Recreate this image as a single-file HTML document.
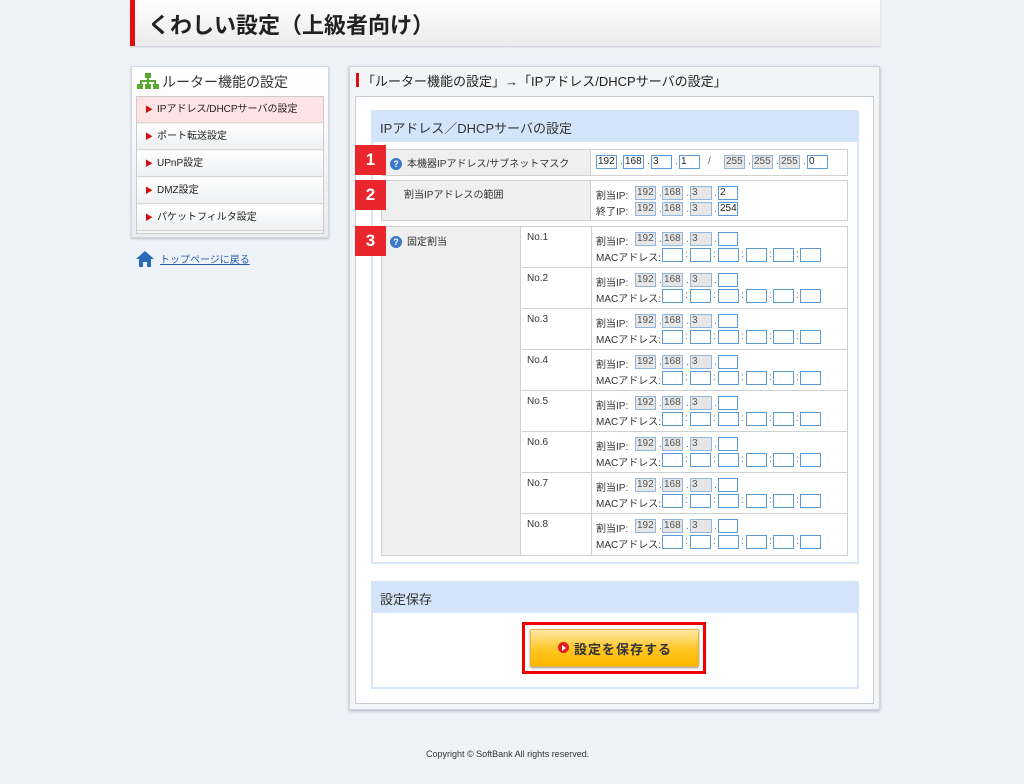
<!DOCTYPE html>
<html><head><meta charset="utf-8"><style>
*{margin:0;padding:0;box-sizing:border-box}
body{width:1024px;height:784px;background:#eef3fa;font-family:"Liberation Sans","Noto Sans CJK JP",sans-serif;color:#333;position:relative;overflow:hidden;font-size:10px}
.a{position:absolute}
.ib{position:absolute;height:14px;border:1px solid #5b9bd5;background:#fff;font-size:10px;line-height:12px;padding-left:1px;color:#222}
.g{background:#e6e6e6;border-color:#8fb7e0;color:#555}
.sep{position:absolute;font-size:10px;color:#666}
.lbl{position:absolute;font-size:10px;color:#333}
.badge{position:absolute;left:355px;width:31px;height:30px;background:#e8262c;color:#fff;font-weight:bold;font-size:17px;text-align:center;line-height:30px}
.q{display:inline-block;width:12px;height:12px;border-radius:50%;background:#3a78c8;color:#fff;font-size:9px;font-weight:bold;text-align:center;line-height:12px;vertical-align:middle;margin-right:5px}
.mi{position:absolute;left:137px;width:186px;height:26px;background:linear-gradient(#fff,#eef0f2);border-bottom:1px solid #d8d8d8;font-size:10px;line-height:26px;padding-left:8px;color:#222}
.mi:before{content:"▶";color:#d01010;font-size:8px;margin-right:4px}
</style></head><body>
<!-- header -->
<div class="a" style="left:130px;top:0;width:750px;height:46px;background:linear-gradient(#fff,#ebebeb);box-shadow:0 1px 2px #c8ccd2"></div>
<div class="a" style="left:130px;top:0;width:5px;height:46px;background:#e01010"></div>
<div class="a" style="left:148px;top:8px;font-size:22px;font-weight:bold;color:#222">くわしい設定（上級者向け）</div>
<!-- left menu -->
<div class="a" style="left:131px;top:66px;width:198px;height:172px;background:linear-gradient(#fff,#eaecee);border:1px solid #d5d9de;box-shadow:0 1px 2px #bbb"></div>
<svg class="a" style="left:137px;top:73px" width="22" height="16" viewBox="0 0 22 16"><rect x="8" y="0" width="6" height="5" fill="#5aa830"/><rect x="10" y="5" width="2" height="3" fill="#5aa830"/><rect x="3" y="7" width="16" height="2" fill="#5aa830"/><rect x="3" y="8" width="2" height="3" fill="#5aa830"/><rect x="10" y="8" width="2" height="3" fill="#5aa830"/><rect x="17" y="8" width="2" height="3" fill="#5aa830"/><rect x="0" y="11" width="6" height="5" fill="#5aa830"/><rect x="8" y="11" width="6" height="5" fill="#5aa830"/><rect x="16" y="11" width="6" height="5" fill="#5aa830"/></svg>
<div class="a" style="left:162px;top:72px;font-size:14px;color:#333">ルーター機能の設定</div>
<div class="a" style="left:136px;top:96px;width:188px;height:138px;border:1px solid #ccc;background:#f4f4f4"></div>
<div class="mi" style="top:97px;background:#fde3e3">IPアドレス/DHCPサーバの設定</div>
<div class="mi" style="top:124px">ポート転送設定</div>
<div class="mi" style="top:151px">UPnP設定</div>
<div class="mi" style="top:178px">DMZ設定</div>
<div class="mi" style="top:205px">パケットフィルタ設定</div>
<svg class="a" style="left:135px;top:250px" width="20" height="18" viewBox="0 0 20 18"><path d="M10 1L1 9h3v8h4v-5h4v5h4V9h3z" fill="#2a6ab8"/></svg>
<div class="a" style="left:160px;top:251px;font-size:10px;color:#2a5caa;text-decoration:underline">トップページに戻る</div>
<!-- main panel -->
<div class="a" style="left:349px;top:66px;width:531px;height:644px;background:#f2f4f6;border:1px solid #d0d5da;box-shadow:0 1px 3px #aab"></div>
<div class="a" style="left:356px;top:73px;width:3px;height:14px;background:#e01010"></div>
<div class="a" style="left:362px;top:71px;font-size:13px;color:#222">「ルーター機能の設定」→「IPアドレス/DHCPサーバの設定」</div>
<div class="a" style="left:355px;top:96px;width:519px;height:608px;background:#fff;border:1px solid #c8ced6"></div>
<!-- section 1 -->
<div class="a" style="left:371px;top:110px;width:488px;height:454px;border:2px solid #d8e6f8;background:#fff"></div>
<div class="a" style="left:371px;top:110px;width:488px;height:32px;background:#d4e5fb"></div>
<div class="a" style="left:380px;top:118px;font-size:13px;color:#333">IPアドレス／DHCPサーバの設定</div>
<!-- row1 -->
<div class="a" style="left:381px;top:149px;width:467px;height:27px;border:1px solid #d0d0d0;background:#fff"></div>
<div class="a" style="left:382px;top:150px;width:209px;height:25px;background:#efefef;border-right:1px solid #d0d0d0"></div>
<div class="a" style="left:390px;top:155px;font-size:10px"><span class="q">?</span>本機器IPアドレス/サブネットマスク</div>
<div class="badge" style="top:145px">1</div>
<div class="ib" style="left:596px;top:155px;width:21px">192</div><span class="sep" style="left:620px;top:156px">.</span>
<div class="ib" style="left:623px;top:155px;width:21px">168</div><span class="sep" style="left:647px;top:156px">.</span>
<div class="ib" style="left:651px;top:155px;width:21px">3</div><span class="sep" style="left:675px;top:156px">.</span>
<div class="ib" style="left:679px;top:155px;width:21px">1</div><span class="sep" style="left:708px;top:156px">/</span>
<div class="ib g" style="left:724px;top:155px;width:21px">255</div><span class="sep" style="left:748px;top:156px">.</span>
<div class="ib g" style="left:752px;top:155px;width:21px">255</div><span class="sep" style="left:776px;top:156px">.</span>
<div class="ib g" style="left:779px;top:155px;width:21px">255</div><span class="sep" style="left:803px;top:156px">.</span>
<div class="ib" style="left:807px;top:155px;width:21px">0</div>
<!-- row2 -->
<div class="a" style="left:381px;top:180px;width:467px;height:41px;border:1px solid #d0d0d0;background:#fff"></div>
<div class="a" style="left:382px;top:181px;width:209px;height:39px;background:#efefef;border-right:1px solid #d0d0d0"></div>
<div class="a" style="left:404px;top:186px;font-size:10px">割当IPアドレスの範囲</div>
<div class="badge" style="top:180px">2</div>
<div class="lbl" style="left:596px;top:187px">割当IP:</div>
<div class="ib g" style="left:635px;top:186px;width:21px">192</div><span class="sep" style="left:659px;top:188px">.</span>
<div class="ib g" style="left:662px;top:186px;width:21px">168</div><span class="sep" style="left:686px;top:188px">.</span>
<div class="ib g" style="left:690px;top:186px;width:22px">3</div><span class="sep" style="left:714px;top:188px">.</span>
<div class="ib" style="left:718px;top:186px;width:20px">2</div>
<div class="lbl" style="left:596px;top:203px">終了IP:</div>
<div class="ib g" style="left:635px;top:202px;width:21px">192</div><span class="sep" style="left:659px;top:204px">.</span>
<div class="ib g" style="left:662px;top:202px;width:21px">168</div><span class="sep" style="left:686px;top:204px">.</span>
<div class="ib g" style="left:690px;top:202px;width:22px">3</div><span class="sep" style="left:714px;top:204px">.</span>
<div class="ib" style="left:718px;top:202px;width:20px">254</div>
<!-- row3 -->
<div class="a" style="left:381px;top:226px;width:467px;height:330px;border:1px solid #d0d0d0;background:#fff"></div>
<div class="a" style="left:382px;top:227px;width:139px;height:328px;background:#efefef;border-right:1px solid #d0d0d0"></div>
<div class="a" style="left:591px;top:227px;width:1px;height:328px;background:#d0d0d0"></div>
<div class="a" style="left:390px;top:233px;font-size:10px"><span class="q">?</span>固定割当</div>
<div class="badge" style="top:226px">3</div>
<div id="rows"></div>
<script>
var h='';
for(var i=0;i<8;i++){var t=227+i*41;
if(i>0)h+='<div class="a" style="left:522px;top:'+(t-1)+'px;width:325px;height:1px;background:#d0d0d0"></div>';
h+='<div class="lbl" style="left:527px;top:'+(t+5)+'px">No.'+(i+1)+'</div>';
h+='<div class="lbl" style="left:596px;top:'+(t+6)+'px">割当IP:</div>';
h+='<div class="ib g" style="left:635px;top:'+(t+5)+'px;width:21px">192</div><span class="sep" style="left:659px;top:'+(t+7)+'px">.</span>';
h+='<div class="ib g" style="left:662px;top:'+(t+5)+'px;width:21px">168</div><span class="sep" style="left:686px;top:'+(t+7)+'px">.</span>';
h+='<div class="ib g" style="left:690px;top:'+(t+5)+'px;width:22px">3</div><span class="sep" style="left:714px;top:'+(t+7)+'px">.</span>';
h+='<div class="ib" style="left:718px;top:'+(t+5)+'px;width:20px"></div>';
h+='<div class="lbl" style="left:596px;top:'+(t+22)+'px">MACアドレス:</div>';
var xs=[662,690,718,746,773,800];
for(var j=0;j<6;j++){h+='<div class="ib" style="left:'+xs[j]+'px;top:'+(t+21)+'px;width:21px"></div>';if(j<5)h+='<span class="sep" style="left:'+(xs[j]+23)+'px;top:'+(t+22)+'px">:</span>';}
}
document.getElementById('rows').outerHTML=h;
</script>
<!-- save -->
<div class="a" style="left:371px;top:581px;width:488px;height:108px;border:2px solid #d8e6f8;background:#fff"></div>
<div class="a" style="left:371px;top:581px;width:488px;height:32px;background:#d4e5fb"></div>
<div class="a" style="left:380px;top:589px;font-size:13px;color:#333">設定保存</div>
<div class="a" style="left:522px;top:622px;width:184px;height:52px;border:3px solid #f00000"></div>
<div class="a" style="left:530px;top:629px;width:169px;height:38px;background:linear-gradient(#ffe9a8,#ffc520 55%,#ffb800);border:1px solid #e9b040;border-radius:2px;box-shadow:0 1px 2px #999"></div>
<div class="a" style="left:558px;top:642px;width:11px;height:11px;border-radius:50%;background:#e02020"></div>
<div class="a" style="left:562px;top:645px;width:0;height:0;border-left:4px solid #fff;border-top:3px solid transparent;border-bottom:3px solid transparent"></div>
<div class="a" style="left:574px;top:639px;font-size:13px;font-weight:bold;color:#333;letter-spacing:1px">設定を保存する</div>
<div class="a" style="left:426px;top:749px;font-size:9px;color:#333">Copyright © SoftBank All rights reserved.</div>
</body></html>
